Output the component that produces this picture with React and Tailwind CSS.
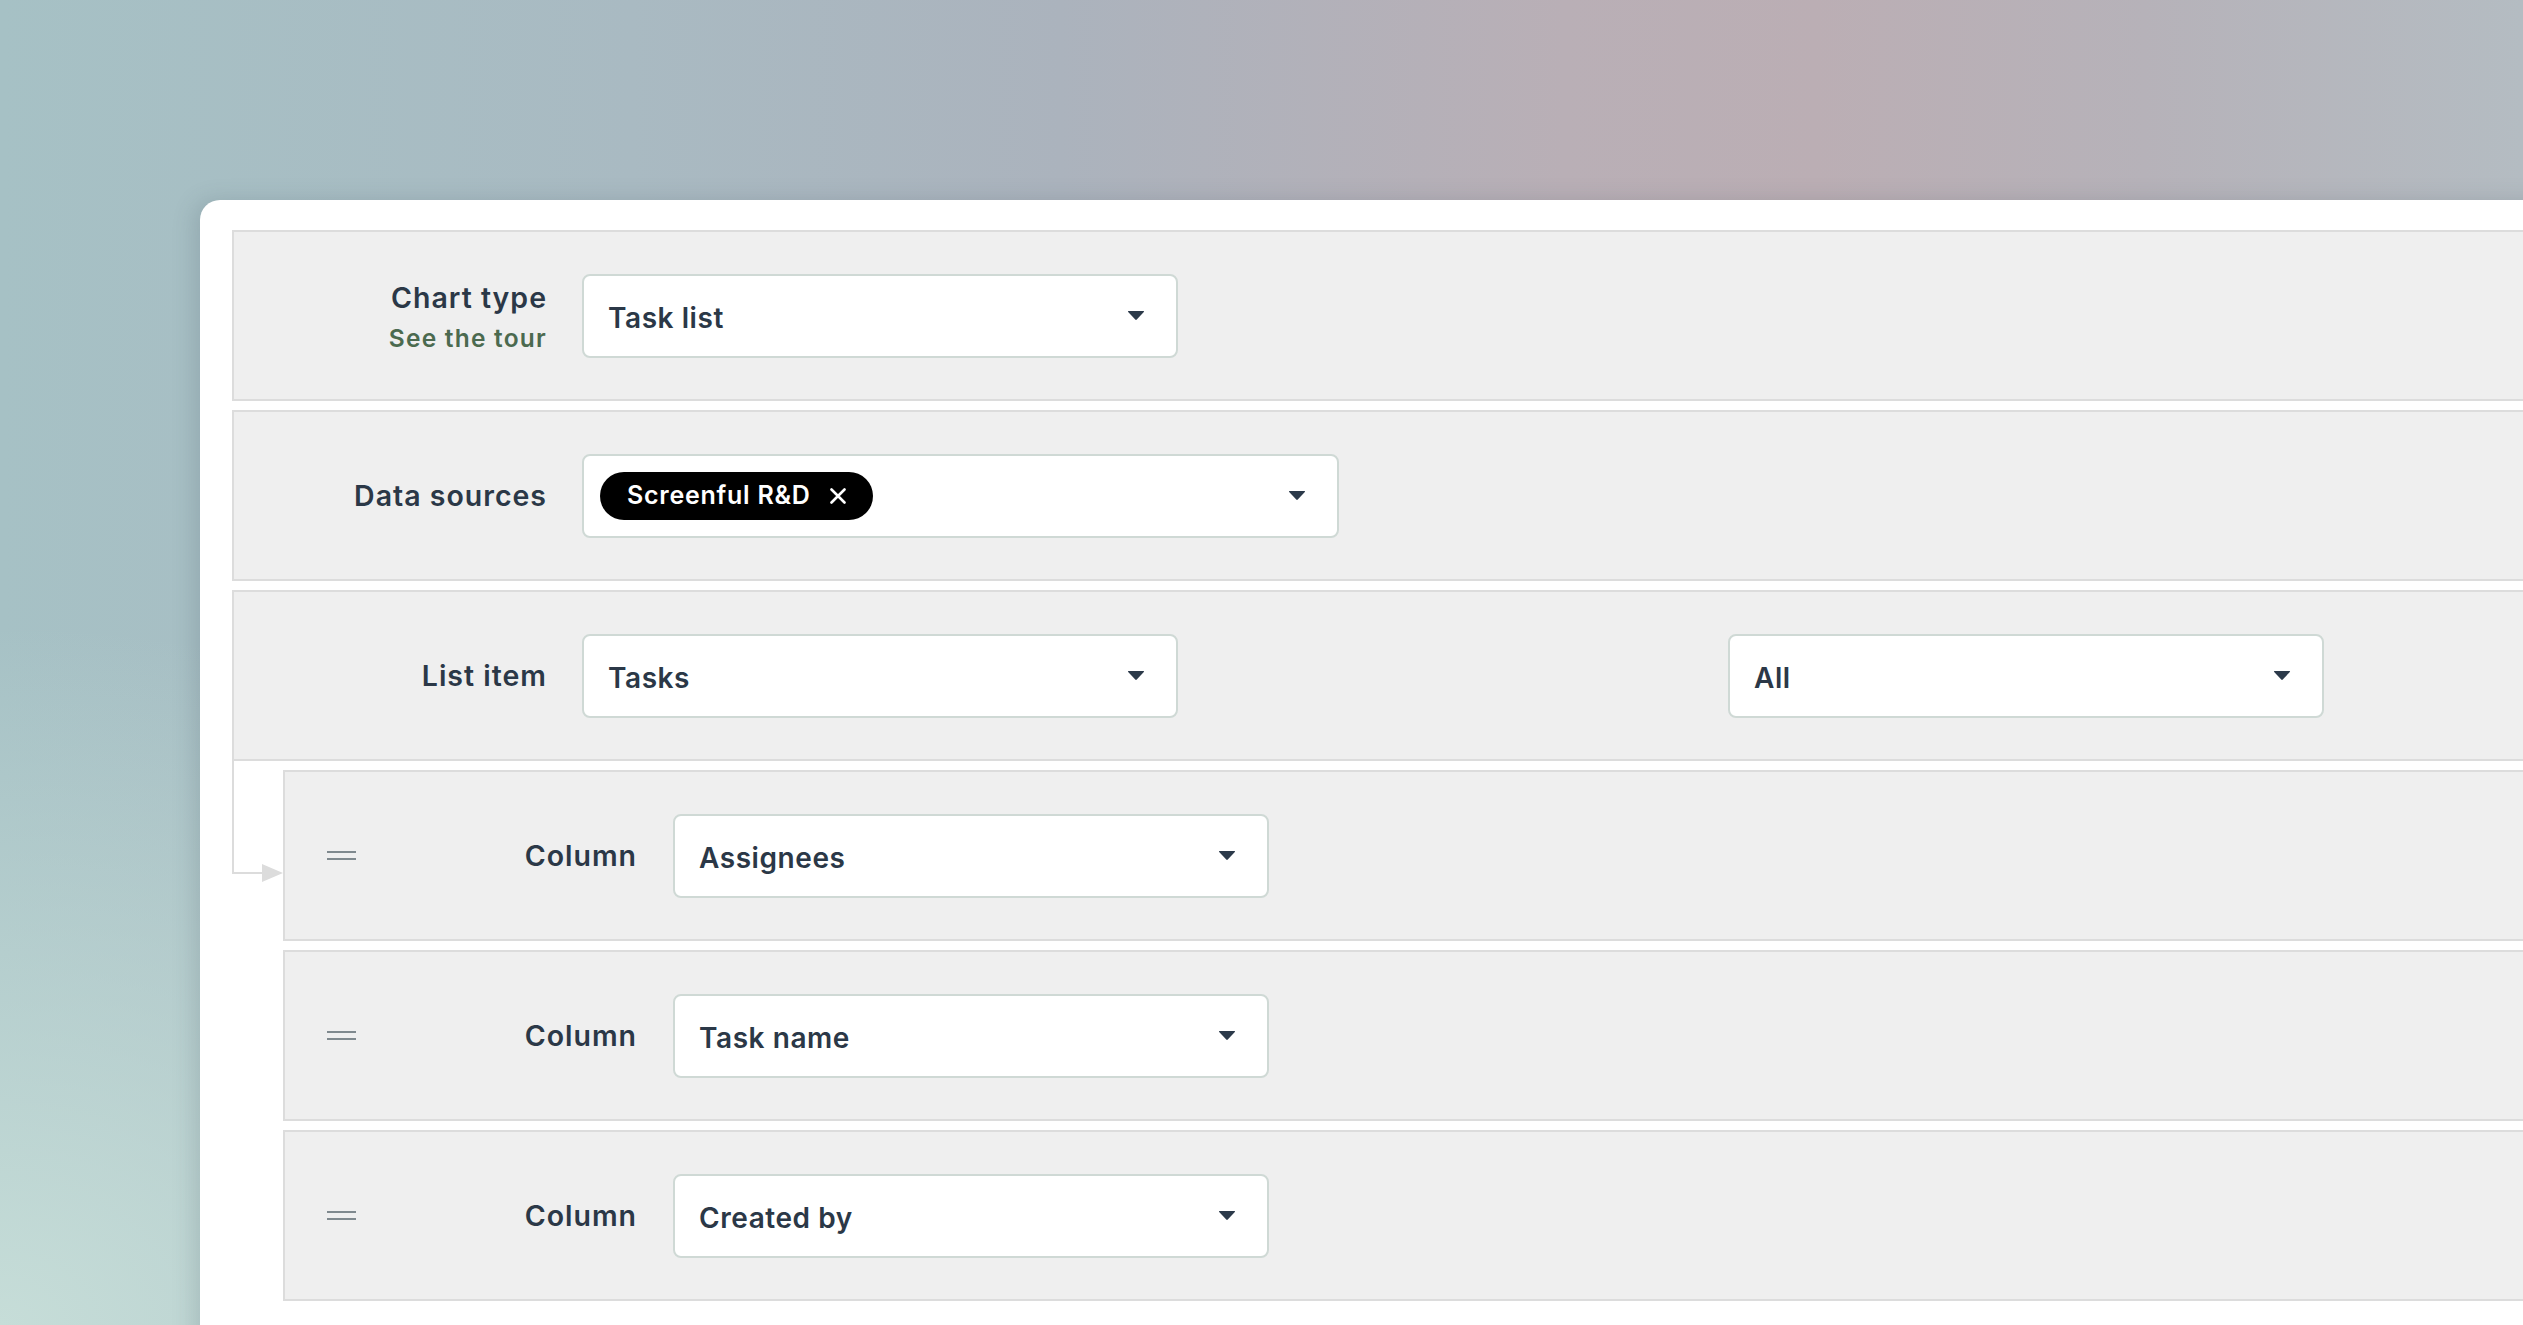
import React from "react";

const FONT = { fontFamily: "Inter, 'Open Sans', 'Liberation Sans', sans-serif" };

function Caret() {
  return (
    <svg width="18" height="11" viewBox="0 0 18 11" className="shrink-0">
      <path d="M1.5 1 L16.5 1 Q17.5 1 16.8 1.9 L9.8 9.6 Q9 10.4 8.2 9.6 L1.2 1.9 Q0.5 1 1.5 1 Z" fill="#2c3a4a" />
    </svg>
  );
}

function Select({ width, children }) {
  return (
    <div
      className={`${width} h-[84px] shrink-0 bg-white border-2 border-[#cfd9d5] rounded-[8px] flex items-center justify-between pl-[24px] pr-[31px]`}
    >
      <div className="flex items-center text-[28px] font-semibold text-[#2b3847] tracking-[0.02em] leading-none pt-[4px]">
        {children}
      </div>
      <Caret />
    </div>
  );
}

function Label({ children, sub }) {
  return (
    <div className="flex flex-col items-end text-right">
      <div className="text-[28.5px] font-semibold text-[#2b3847] tracking-[0.035em] leading-[40px]">{children}</div>
      {sub && (
        <div className="mt-[4px] text-[24.5px] font-semibold text-[#4b6a4f] tracking-[0.05em] leading-[32px]">{sub}</div>
      )}
    </div>
  );
}

function TopRow({ label, sub, children }) {
  return (
    <div className="h-[171px] shrink-0 bg-[#efefef] border-2 border-[#dcdcdc] flex items-center">
      <div className="w-[348px] shrink-0 pr-[35px] flex justify-end">
        <Label sub={sub}>{label}</Label>
      </div>
      {children}
    </div>
  );
}

function Handle() {
  return (
    <div className="w-[29px] shrink-0 flex flex-col gap-[5px]">
      <div className="h-[2px] bg-[#7f898e]" />
      <div className="h-[2px] bg-[#7f898e]" />
    </div>
  );
}

function ColumnRow({ value }) {
  return (
    <div className="h-[171px] shrink-0 bg-[#efefef] border-2 border-[#dcdcdc] flex items-center pl-[42px]">
      <Handle />
      <div className="w-[317px] shrink-0 pr-[36px] flex justify-end">
        <Label>Column</Label>
      </div>
      <Select width="w-[596px]">{value}</Select>
    </div>
  );
}

function Chip() {
  return (
    <div className="h-[48px] rounded-full bg-black text-white flex items-center pl-[27px] pr-[27px] gap-[19px] -ml-[8px]">
      <span className="text-[25px] font-semibold tracking-[0.03em] leading-none">Screenful R&amp;D</span>
      <svg width="16" height="16" viewBox="0 0 16 16">
        <path d="M1.5 1.5 L14.5 14.5 M14.5 1.5 L1.5 14.5" stroke="white" strokeWidth="2.6" strokeLinecap="round" />
      </svg>
    </div>
  );
}

export default function App() {
  return (
    <div
      style={FONT}
      className="w-[2523px] h-[1325px] overflow-hidden bg-[radial-gradient(ellipse_900px_700px_at_0%_100%,#c6ddd8_0%,rgba(198,221,216,0)_100%),linear-gradient(90deg,#a6c1c5_0%,#a9bac2_25%,#abb3bd_42%,#b9afb6_62%,#bbaeb4_72%,#b6b2b9_85%,#b4bcc2_100%)]"
    >
      <div className="pt-[200px] pl-[200px]">
        <div className="w-[2400px] h-[1200px] bg-white rounded-tl-[20px] shadow-[-6px_0_22px_rgba(60,80,90,0.18)] pl-[32px] pt-[30px]">
          <div className="flex flex-col gap-[9px]">
            <TopRow label="Chart type" sub="See the tour">
              <Select width="w-[596px]">Task list</Select>
            </TopRow>
            <TopRow label="Data sources">
              <div className="w-[757px] h-[84px] shrink-0 bg-white border-2 border-[#cfd9d5] rounded-[8px] flex items-center justify-between pl-[24px] pr-[31px]">
                <Chip />
                <Caret />
              </div>
            </TopRow>
            <TopRow label="List item">
              <Select width="w-[596px]">Tasks</Select>
              <div className="ml-[550px]">
                <Select width="w-[596px]">All</Select>
              </div>
            </TopRow>
            <div className="flex">
              <div className="w-[51px] shrink-0 -mt-[9px] flex items-start">
                <div className="flex items-end">
                  <div className="w-[30px] h-[113px] border-l-2 border-b-2 border-[#dcdcdc]" />
                  <svg width="21" height="18" viewBox="0 0 21 18" className="-mb-[8px] shrink-0">
                    <path d="M0 0 L21 9 L0 18 Z" fill="#dcdcdc" />
                  </svg>
                </div>
              </div>
              <div className="flex-1 flex flex-col gap-[9px]">
                <ColumnRow value="Assignees" />
                <ColumnRow value="Task name" />
                <ColumnRow value="Created by" />
              </div>
            </div>
          </div>
        </div>
      </div>
    </div>
  );
}
